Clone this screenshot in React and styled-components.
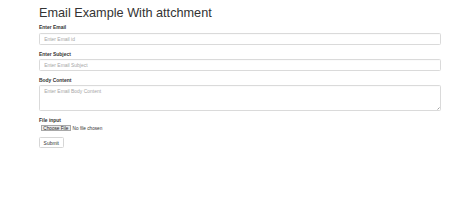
import React from "react";
import styled, { createGlobalStyle } from "styled-components";

const GlobalStyle = createGlobalStyle`
  * { box-sizing: border-box; }
  html, body {
    margin: 0;
    padding: 0;
    background: #fff;
    font-family: "Liberation Sans", Arial, Helvetica, sans-serif;
    color: #333;
  }
`;

const Container = styled.div`
  width: 441px;
  padding-left: 39px;
`;

const Title = styled.h1`
  font-size: 12.7px;
  line-height: 1.1;
  font-weight: 500;
  margin: 7px 0 3.5px;
  color: #333;
`;

const Form = styled.form`
  display: flex;
  flex-direction: column;
`;

const FormGroup = styled.div`
  margin-bottom: 5.3px;
`;

const Label = styled.label`
  display: block;
  font-size: 4.94px;
  line-height: 7px;
  font-weight: 700;
  margin-bottom: 1.76px;
`;

const Input = styled.input`
  display: block;
  width: 100%;
  height: 12px;
  padding: 2.1px 4.2px;
  font-size: 4.94px;
  line-height: 1.42857;
  font-family: inherit;
  color: #555;
  background: #fff;
  border: 1px solid #dadada;
  border-radius: 1.4px;
  box-shadow: inset 0 0.35px 0.35px rgba(0, 0, 0, 0.075);
  outline: none;

  &::placeholder {
    color: #a6a6a6;
  }
`;

/* tiny grip in the corner, as the native one looks at this scale */
const TextArea = styled(Input).attrs({ as: "textarea" })`
  height: 26px;
  resize: none;
  background: #fff
    linear-gradient(135deg, transparent 50%, #a0a0a0 50%, #a0a0a0 65%, transparent 65%)
    no-repeat right 0.5px bottom 0.5px / 2.5px 2.5px;
`;

const FileInput = styled.input`
  display: block;
  height: 6.6px;
  line-height: 5px;
  font-size: 4.7px;
  font-family: inherit;
  color: #333;

  &::file-selector-button {
    height: 6px;
    margin: 0 2px 0 2px;
    padding: 0 1.3px;
    font-size: 4.7px;
    font-family: inherit;
    color: #222;
    background: #ebebeb;
    border: 1px solid #a8a8a8;
    border-radius: 0;
  }
`;

const SubmitButton = styled.button`
  align-self: flex-start;
  height: 11px;
  padding: 1.8px 3.6px;
  font-size: 4.94px;
  line-height: 1.42857;
  font-family: inherit;
  color: #333;
  background: #fff;
  border: 1px solid #d6d6d6;
  border-radius: 1.4px;
  cursor: pointer;
`;

export default function App() {
  return (
    <>
      <GlobalStyle />
      <Container>
        <Title>Email Example With attchment</Title>
        <Form onSubmit={(e) => e.preventDefault()}>
          <FormGroup>
            <Label htmlFor="email">Enter Email</Label>
            <Input id="email" type="email" placeholder="Enter Email id" />
          </FormGroup>
          <FormGroup>
            <Label htmlFor="subject">Enter Subject</Label>
            <Input id="subject" type="text" placeholder="Enter Email Subject" />
          </FormGroup>
          <FormGroup>
            <Label htmlFor="body">Body Content</Label>
            <TextArea id="body" placeholder="Enter Email Body Content" />
          </FormGroup>
          <FormGroup>
            <Label htmlFor="file">File input</Label>
            <FileInput id="file" type="file" />
          </FormGroup>
          <SubmitButton type="submit">Submit</SubmitButton>
        </Form>
      </Container>
    </>
  );
}
